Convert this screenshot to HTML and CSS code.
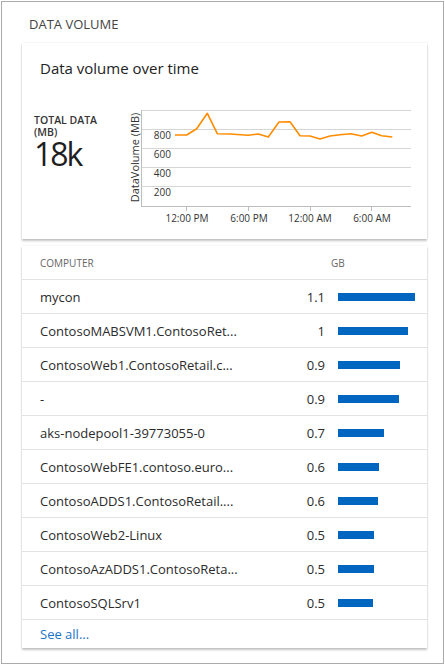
FILE: index.html
```html
<!DOCTYPE html>
<html lang="en">
<head>
<meta charset="utf-8">
<title>Data volume</title>
<link rel="stylesheet" href="styles.css">
</head>
<body>
<div class="frame">
  <h1 class="section-title">DATA VOLUME</h1>

  <section class="card chart-card">
    <h2 class="card-title">Data volume over time</h2>
    <div class="chart-row">
      <div class="stat">
        <div class="stat-label">TOTAL DATA<br>(MB)</div>
        <div class="stat-value">18k</div>
      </div>
      <svg class="chart" width="290" height="124" viewBox="126 104 290 124" xmlns="http://www.w3.org/2000/svg">
        <g class="grid">
          <line x1="141" y1="109.5" x2="411" y2="109.5"/>
          <line x1="141" y1="128.5" x2="411" y2="128.5"/>
          <line x1="141" y1="147.5" x2="411" y2="147.5"/>
          <line x1="141" y1="166.5" x2="411" y2="166.5"/>
          <line x1="141" y1="185.5" x2="411" y2="185.5"/>
        </g>
        <g class="axis">
          <line x1="141.5" y1="109" x2="141.5" y2="205"/>
          <line x1="141" y1="205.5" x2="411" y2="205.5"/>
          <line x1="186.5" y1="205" x2="186.5" y2="210"/>
          <line x1="248.5" y1="205" x2="248.5" y2="210"/>
          <line x1="310.5" y1="205" x2="310.5" y2="210"/>
          <line x1="371.5" y1="205" x2="371.5" y2="210"/>
        </g>
        <g class="ylabels">
          <text x="171" y="138">800</text>
          <text x="171" y="157">600</text>
          <text x="171" y="176">400</text>
          <text x="171" y="195">200</text>
        </g>
        <text class="ytitle" transform="translate(139 156.5) rotate(-90)">DataVolume (MB)</text>
        <g class="xlabels">
          <text x="187" y="221">12:00 PM</text>
          <text x="249" y="221">6:00 PM</text>
          <text x="310" y="221">12:00 AM</text>
          <text x="372" y="221">6:00 AM</text>
        </g>
        <polyline class="series" points="175,134 186.7,134 196.7,127.7 207.3,112.3 217.3,132.7 230,133 248.3,134.3 258.3,133 268.3,136 279,121 290,120.7 300,134.7 310,135 320,138 330,135 340,133.7 350.7,132.7 361.7,135 371.7,131.3 381.7,134.7 392.3,136"/>
      </svg>
    </div>
  </section>

  <section class="card table-card">
    <div class="row head">
      <span class="name">COMPUTER</span>
      <span class="unit">GB</span>
    </div>
    <div class="row"><span class="name">mycon</span><span class="val">1.1</span><span class="track"><span class="bar" style="width:76.6px"></span></span></div>
    <div class="row"><span class="name">ContosoMABSVM1.ContosoRet...</span><span class="val">1</span><span class="track"><span class="bar" style="width:69.7px"></span></span></div>
    <div class="row"><span class="name">ContosoWeb1.ContosoRetail.c...</span><span class="val">0.9</span><span class="track"><span class="bar" style="width:61.6px"></span></span></div>
    <div class="row"><span class="name">-</span><span class="val">0.9</span><span class="track"><span class="bar" style="width:61px"></span></span></div>
    <div class="row"><span class="name">aks-nodepool1-39773055-0</span><span class="val">0.7</span><span class="track"><span class="bar" style="width:45.6px"></span></span></div>
    <div class="row"><span class="name">ContosoWebFE1.contoso.euro...</span><span class="val">0.6</span><span class="track"><span class="bar" style="width:40.7px"></span></span></div>
    <div class="row"><span class="name">ContosoADDS1.ContosoRetail....</span><span class="val">0.6</span><span class="track"><span class="bar" style="width:40px"></span></span></div>
    <div class="row"><span class="name">ContosoWeb2-Linux</span><span class="val">0.5</span><span class="track"><span class="bar" style="width:35.7px"></span></span></div>
    <div class="row"><span class="name">ContosoAzADDS1.ContosoReta...</span><span class="val">0.5</span><span class="track"><span class="bar" style="width:35.7px"></span></span></div>
    <div class="row"><span class="name">ContosoSQLSrv1</span><span class="val">0.5</span><span class="track"><span class="bar" style="width:35px"></span></span></div>
    <div class="see-all"><a href="#">See all...</a></div>
  </section>
</div>
</body>
</html>
```
FILE: styles.css
```css
* { box-sizing: border-box; }

html, body {
  margin: 0;
  padding: 0;
  background: #ffffff;
}

body {
  font-family: "Open Sans", "Noto Sans", sans-serif;
  color: #2b2b2b;
}

.frame {
  margin: 1px;
  width: 443px;
  height: 663px;
  border: 1px solid #ababab;
  padding: 13px 16px 0 20px;
  background: #ffffff;
}

.section-title {
  margin: 0;
  font-size: 13px;
  line-height: 18px;
  font-weight: 400;
  color: #444444;
  padding-left: 7px;
  height: 28px;
}

.card {
  background: #ffffff;
  box-shadow: 0 0 2px rgba(0, 0, 0, 0.10), 0 2px 2px rgba(0, 0, 0, 0.22);
}

.chart-card {
  height: 196px;
  padding-top: 15px;
}

.card-title {
  margin: 0;
  padding-left: 18px;
  font-size: 15px;
  line-height: 20px;
  font-weight: 400;
  color: #222222;
}

.chart-row {
  display: flex;
  margin-top: 27px;
  padding-left: 12px;
}

.stat {
  width: 92px;
  padding-top: 9px;
}

.stat-label {
  font-size: 10.5px;
  line-height: 12px;
  font-weight: 600;
  color: #333333;
}

.stat-value {
  font-size: 32px;
  line-height: 26px;
  letter-spacing: -2px;
  color: #1e1e1e;
  margin-top: 3px;
}

.chart {
  display: block;
}

.chart .grid line {
  stroke: #d6d6d6;
  stroke-width: 1;
}

.chart .axis line {
  stroke: #bdbdbd;
  stroke-width: 1;
}

.chart text {
  font-family: "Open Sans", "Noto Sans", sans-serif;
  font-size: 10px;
  fill: #333333;
}

.chart .ylabels text { text-anchor: end; }
.chart .xlabels text { text-anchor: middle; }
.chart .ytitle { text-anchor: middle; font-size: 11px; }

.chart .series {
  fill: none;
  stroke: #ff8c00;
  stroke-width: 1.6;
  stroke-linejoin: round;
}

.table-card {
  margin-top: 7px;
}

.row {
  display: flex;
  align-items: center;
  height: 34px;
  padding-left: 18px;
  border-bottom: 1px solid #e3e3e3;
  font-size: 13px;
}

.row.head {
  font-size: 10px;
  color: #666666;
  height: 34px;
}

.row .name {
  width: 245px;
  white-space: nowrap;
  overflow: hidden;
}

.row .val {
  width: 40px;
  text-align: right;
}

.row .unit {
  margin-left: 46px;
}

.track {
  display: flex;
  margin-left: 13px;
  width: 80px;
}

.bar {
  display: block;
  height: 8px;
  background: #0066c0;
}

.see-all {
  height: 28px;
  padding-left: 18px;
  display: flex;
  align-items: center;
  font-size: 13px;
}

.see-all a {
  color: #1a73c8;
  text-decoration: none;
}
```
